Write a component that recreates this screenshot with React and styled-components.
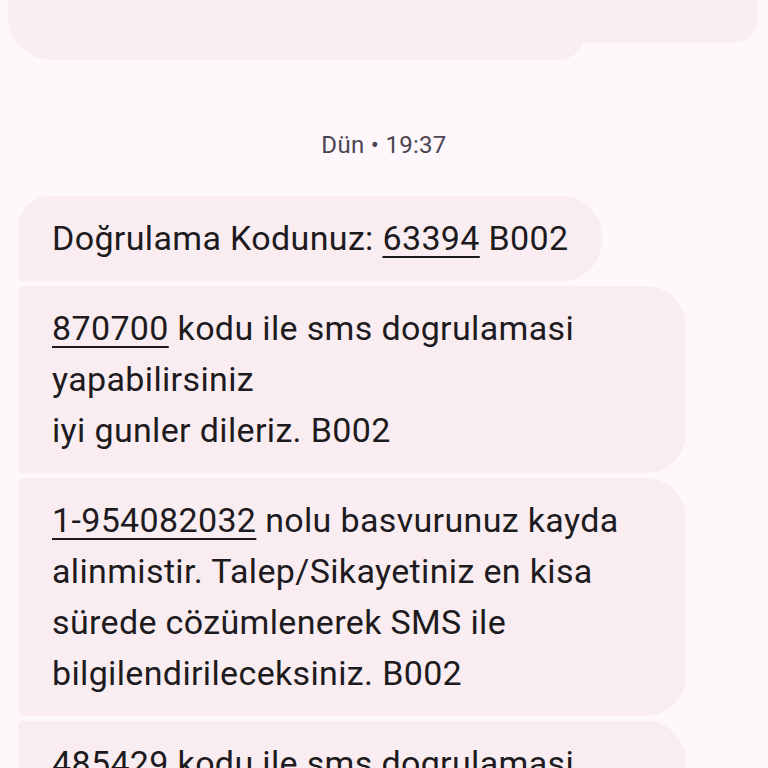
import styled, { createGlobalStyle } from "styled-components";

const Global = createGlobalStyle`
body{
margin:0;
background:#fef7fc;
font-family:Roboto, "Noto Sans", "Liberation Sans", sans-serif;
}
`;

const Page = styled.div`
width:768px;
height:768px;
overflow:hidden;
background:#fef7fc;
`;

const TopShape = styled.div`
display:flex;
align-items:flex-start;
margin:0 10px 0 8px;
`;

const TopLeft = styled.div`
width:575px;
height:60px;
background:#f9eef3;
border-radius:0 0 24px 44px;
`;

const TopRight = styled.div`
flex:1;
height:43px;
background:#f9eef3;
border-radius:0 0 26px 0;
`;

const DateStamp = styled.div`
margin-top:70px;
text-align:center;
font-size:24px;
letter-spacing:0.3px;
line-height:30px;
color:#4a4550;
`;

const Thread = styled.div`
display:flex;
flex-direction:column;
align-items:flex-start;
gap:5px;
margin-top:36px;
padding-left:18px;
`;

const Bubble = styled.div`
max-width:600px;
padding:17px 34px;
background:#f9edf2;
color:#1d1b20;
font-size:34px;
letter-spacing:0.35px;
line-height:51px;
white-space:pre-line;
border-radius:${p => (p.$first ? "32px" : "6px")} 40px 40px 6px;
`;

const Code = styled.span`
text-decoration:underline;
text-decoration-thickness:2px;
text-underline-offset:6px;
`;

const App = () => {
  return (
    <Page>
      <Global />
      <TopShape>
        <TopLeft />
        <TopRight />
      </TopShape>
      <DateStamp>Dün • 19:37</DateStamp>
      <Thread>
        <Bubble $first>
          Doğrulama Kodunuz: <Code>63394</Code> B002
        </Bubble>
        <Bubble>
          <Code>870700</Code>{" kodu ile sms dogrulamasi yapabilirsiniz\niyi gunler dileriz. B002"}
        </Bubble>
        <Bubble>
          <Code>1-954082032</Code> nolu basvurunuz kayda alinmistir. Talep/Sikayetiniz en kisa sürede cözümlenerek SMS ile bilgilendirileceksiniz. B002
        </Bubble>
        <Bubble>
          <Code>485429</Code>{" kodu ile sms dogrulamasi yapabilirsiniz\niyi gunler dileriz. B002"}
        </Bubble>
      </Thread>
    </Page>
  );
};

export default App;
